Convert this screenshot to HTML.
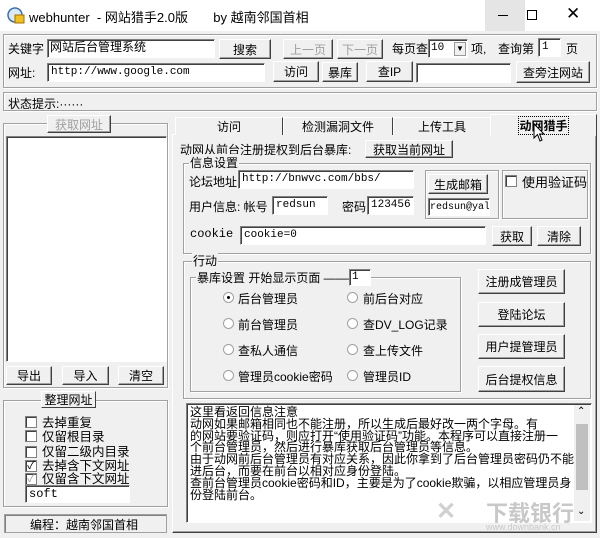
<!DOCTYPE html>
<html><head><meta charset="utf-8"><style>
*{box-sizing:border-box;margin:0;padding:0}
body{width:600px;height:538px;background:#f0f0f0;font-family:"Liberation Sans","Noto Sans CJK SC",sans-serif;font-size:12px;color:#000;position:relative;overflow:hidden}
.a{position:absolute;white-space:nowrap}
.btn{position:absolute;background:#f0f0f0;border:1px solid;border-color:#fff #404040 #404040 #fff;box-shadow:inset -1px -1px #a0a0a0;text-align:center;font-size:12px;display:flex;align-items:center;justify-content:center}
.dis{color:#a0a0a0}
.in{position:absolute;background:#fff;border:1px solid;border-color:#808080 #fff #fff #808080;box-shadow:inset 1px 1px #404040;font-family:"Liberation Mono","Noto Sans CJK SC",monospace;font-size:11px;padding:2px 3px;line-height:13px;white-space:nowrap;overflow:hidden}
.grp{position:absolute;border:1px solid #a0a0a0;box-shadow:1px 1px #fff,inset 1px 1px #fff}
.lg{position:absolute;background:#f0f0f0;padding:0 1px;white-space:nowrap}
.rad{position:absolute;width:11px;height:11px;border-radius:50%;background:#fff;border:1px solid #a0a0a0}
.rad.on::after{content:"";position:absolute;left:3px;top:3px;width:3px;height:3px;border-radius:50%;background:#000}
.chk{position:absolute;width:12px;height:12px;background:#fff;border:1px solid #808080;box-shadow:inset 1px 1px #404040;font-size:11px;line-height:10px;text-align:center}
.cl{position:absolute;white-space:nowrap;font-size:12.5px}
</style></head><body>
<div class="a" style="left:0;top:0;width:600px;height:31px;background:#fff"></div>
<svg class="a" style="left:7px;top:7px" width="18" height="18" viewBox="0 0 18 18"><circle cx="8" cy="8" r="7" fill="#dbe8f5" stroke="#3d6fb0" stroke-width="1.5"/><rect x="8" y="8" width="9" height="8" fill="#f0c020" stroke="#a07000"/></svg>
<div class="a" style="left:29px;top:7px;font-size:13px">webhunter &nbsp;- 网站猎手2.0版 &nbsp; &nbsp; &nbsp; by 越南邻国首相</div>
<div class="a" style="left:485px;top:0;width:40px;height:31px;background:#e5e5e5"></div>
<div class="a" style="left:498px;top:15px;width:10px;height:1px;background:#000"></div>
<div class="a" style="left:527px;top:10px;width:10px;height:10px;border:1px solid #000"></div>
<div class="a" style="left:566px;top:4px;font-size:17px;font-weight:lighter">✕</div>

<div class="grp" style="left:3px;top:34px;width:594px;height:54px"></div>
<div class="a" style="left:8px;top:40px">关键字</div>
<div class="in" style="left:47px;top:39px;width:168px;height:19px;font-family:'Liberation Sans','Noto Sans CJK SC',sans-serif;font-size:12px;padding:1px 2px">网站后台管理系统</div>
<div class="btn" style="left:219px;top:39px;width:52px;height:20px">搜索</div>
<div class="btn dis" style="left:283px;top:39px;width:50px;height:20px">上一页</div>
<div class="btn dis" style="left:337px;top:39px;width:46px;height:20px">下一页</div>
<div class="a" style="left:392px;top:40px">每页查</div>
<div class="in" style="left:428px;top:39px;width:40px;height:19px;padding:2px 2px">10</div>
<div class="a" style="left:454px;top:42px;width:12px;height:14px;background:#f0f0f0;border:1px solid #999;font-size:8px;text-align:center;line-height:12px">▼</div>
<div class="a" style="left:471px;top:40px">项,</div>
<div class="a" style="left:498px;top:40px">查询第</div>
<div class="in" style="left:538px;top:38px;width:23px;height:19px">1</div>
<div class="a" style="left:566px;top:40px">页</div>

<div class="a" style="left:8px;top:64px">网址:</div>
<div class="in" style="left:47px;top:63px;width:218px;height:19px">http://www.google.com</div>
<div class="btn" style="left:273px;top:61px;width:46px;height:21px">访问</div>
<div class="btn" style="left:322px;top:62px;width:36px;height:20px">暴库</div>
<div class="btn" style="left:366px;top:61px;width:47px;height:21px">查IP</div>
<div class="in" style="left:416px;top:63px;width:95px;height:20px"></div>
<div class="btn" style="left:516px;top:61px;width:74px;height:22px">查旁注网站</div>

<div class="grp" style="left:3px;top:92px;width:594px;height:19px"></div>
<div class="a" style="left:8px;top:95px">状态提示:······</div>

<div class="grp" style="left:3px;top:123px;width:165px;height:265px"></div>
<div class="btn dis" style="left:47px;top:115px;width:64px;height:18px">获取网址</div>
<div class="in" style="left:6px;top:136px;width:161px;height:226px"></div>
<div class="btn" style="left:6px;top:366px;width:46px;height:19px">导出</div>
<div class="btn" style="left:62px;top:366px;width:47px;height:19px">导入</div>
<div class="btn" style="left:118px;top:366px;width:46px;height:19px">清空</div>

<div class="grp" style="left:3px;top:400px;width:165px;height:107px"></div>
<div class="btn" style="left:41px;top:391px;width:55px;height:17px;box-shadow:none">整理网址</div>
<div class="chk" style="left:25px;top:416px"></div><div class="cl" style="left:42px;top:412px">去掉重复</div>
<div class="chk" style="left:25px;top:430px"></div><div class="cl" style="left:42px;top:426px">仅留根目录</div>
<div class="chk" style="left:25px;top:446px"></div><div class="cl" style="left:42px;top:441px">仅留二级内目录</div>
<div class="chk" style="left:25px;top:460px">✓</div><div class="cl" style="left:42px;top:455px">去掉含下文网址</div>
<div class="chk" style="left:25px;top:473px;color:#a0a0a0">✓</div><div class="cl" style="left:42px;top:468px">仅留含下文网址</div>
<div class="in" style="left:25px;top:485px;width:105px;height:18px;font-size:12px">soft</div>

<div class="grp" style="left:4px;top:514px;width:163px;height:19px;box-shadow:inset 1px 1px #808080"></div>
<div class="a" style="left:30px;top:516px">编程：越南邻国首相</div>

<div class="a" style="left:172px;top:134px;width:425px;height:399px;border:1px solid;border-color:#fff #404040 #404040 #fff;box-shadow:inset -1px -1px #a0a0a0"></div>
<div class="btn" style="left:175px;top:117px;width:108px;height:18px;border-bottom:none;box-shadow:none">访问</div>
<div class="btn" style="left:283px;top:117px;width:110px;height:18px;border-bottom:none;box-shadow:none">检测漏洞文件</div>
<div class="btn" style="left:393px;top:117px;width:98px;height:18px;border-bottom:none;box-shadow:none">上传工具</div>
<div class="btn" style="left:490px;top:114px;width:107px;height:22px;border-bottom:none;box-shadow:none;font-weight:bold;z-index:2"><span style="outline:1px dotted #000">动网猎手</span></div>
<svg class="a" style="left:533px;top:123px;z-index:3" width="14" height="20" viewBox="0 0 14 20"><path d="M1 1 L1 15 L4.5 11.5 L7 18 L9 17 L6.5 11 L11 11 Z" fill="#fff" stroke="#000"/></svg>

<div class="a" style="left:180px;top:141px">动网从前台注册提权到后台暴库:</div>
<div class="btn" style="left:365px;top:140px;width:88px;height:18px">获取当前网址</div>

<div class="grp" style="left:183px;top:163px;width:408px;height:91px"></div>
<div class="lg" style="left:189px;top:154px">信息设置</div>
<div class="a" style="left:189px;top:173px">论坛地址</div>
<div class="in" style="left:238px;top:170px;width:176px;height:19px">http://bnwvc.com/bbs/</div>
<div class="grp" style="left:425px;top:170px;width:74px;height:49px"></div>
<div class="btn" style="left:428px;top:174px;width:60px;height:20px">生成邮箱</div>
<div class="in" style="left:428px;top:198px;width:62px;height:18px;font-size:10px;padding:2px 1px">redsun@yal</div>
<div class="grp" style="left:502px;top:170px;width:86px;height:49px"></div>
<div class="chk" style="left:505px;top:175px"></div>
<div class="a" style="left:522px;top:172px;font-size:13px">使用验证码</div>
<div class="a" style="left:189px;top:198px">用户信息: 帐号</div>
<div class="in" style="left:272px;top:196px;width:56px;height:19px">redsun</div>
<div class="a" style="left:342px;top:198px">密码</div>
<div class="in" style="left:367px;top:196px;width:47px;height:19px">123456</div>
<div class="a" style="left:190px;top:227px;font-family:'Liberation Mono',monospace">cookie</div>
<div class="in" style="left:240px;top:226px;width:246px;height:19px">cookie=0</div>
<div class="btn" style="left:492px;top:226px;width:40px;height:20px">获取</div>
<div class="btn" style="left:537px;top:226px;width:44px;height:20px">清除</div>

<div class="grp" style="left:183px;top:261px;width:408px;height:138px"></div>
<div class="lg" style="left:192px;top:252px">行动</div>
<div class="grp" style="left:190px;top:277px;width:271px;height:115px"></div>
<div class="lg" style="left:196px;top:269px">暴库设置 开始显示页面 ———</div>
<div class="in" style="left:349px;top:269px;width:22px;height:17px;padding:1px 2px">1</div>
<div class="rad on" style="left:223px;top:292px"></div><div class="a" style="left:238px;top:290px">后台管理员</div>
<div class="rad" style="left:347px;top:292px"></div><div class="a" style="left:363px;top:290px">前后台对应</div>
<div class="rad" style="left:223px;top:318px"></div><div class="a" style="left:238px;top:316px">前台管理员</div>
<div class="rad" style="left:347px;top:318px"></div><div class="a" style="left:363px;top:316px">查DV_LOG记录</div>
<div class="rad" style="left:223px;top:344px"></div><div class="a" style="left:238px;top:342px">查私人通信</div>
<div class="rad" style="left:347px;top:344px"></div><div class="a" style="left:363px;top:342px">查上传文件</div>
<div class="rad" style="left:223px;top:370px"></div><div class="a" style="left:238px;top:368px">管理员cookie密码</div>
<div class="rad" style="left:347px;top:370px"></div><div class="a" style="left:363px;top:368px">管理员ID</div>
<div class="btn" style="left:478px;top:269px;width:87px;height:25px">注册成管理员</div>
<div class="btn" style="left:478px;top:302px;width:87px;height:25px">登陆论坛</div>
<div class="btn" style="left:478px;top:334px;width:87px;height:25px">用户提管理员</div>
<div class="btn" style="left:478px;top:366px;width:87px;height:26px">后台提权信息</div>

<div class="in" style="left:186px;top:403px;width:406px;height:120px;padding:3px 3px;font-family:'Liberation Sans','Noto Sans CJK SC',sans-serif;font-size:12px;line-height:11.8px;white-space:pre">这里看返回信息注意
动网如果邮箱相同也不能注册，所以生成后最好改一两个字母。有
的网站要验证码，则应打开“使用验证码”功能。本程序可以直接注册一
个前台管理员，然后进行暴库获取后台管理员等信息。
由于动网前后台管理员有对应关系，因此你拿到了后台管理员密码仍不能
进后台，而要在前台以相对应身份登陆。
查前台管理员cookie密码和ID，主要是为了cookie欺骗，以相应管理员身
份登陆前台。</div>
<div class="a" style="left:574px;top:405px;width:16px;height:116px;background:#f0f0f0"></div>
<div class="a" style="left:576px;top:424px;width:12px;height:66px;background:#c0c0c0"></div>
<div class="a" style="left:577px;top:406px;font-size:10px">⌃</div>
<div class="a" style="left:577px;top:506px;font-size:10px">⌄</div>
<div class="a" style="left:436px;top:497px;font-size:24px;color:#d0d0d0;font-weight:bold">✕</div>
<div class="a" style="left:486px;top:496px;font-size:22px;color:#c8c8c8;font-weight:bold">下载银行</div>
<div class="a" style="left:486px;top:522px;font-size:9px;color:#c8c8c8">www.downbank.cn</div>
</body></html>
